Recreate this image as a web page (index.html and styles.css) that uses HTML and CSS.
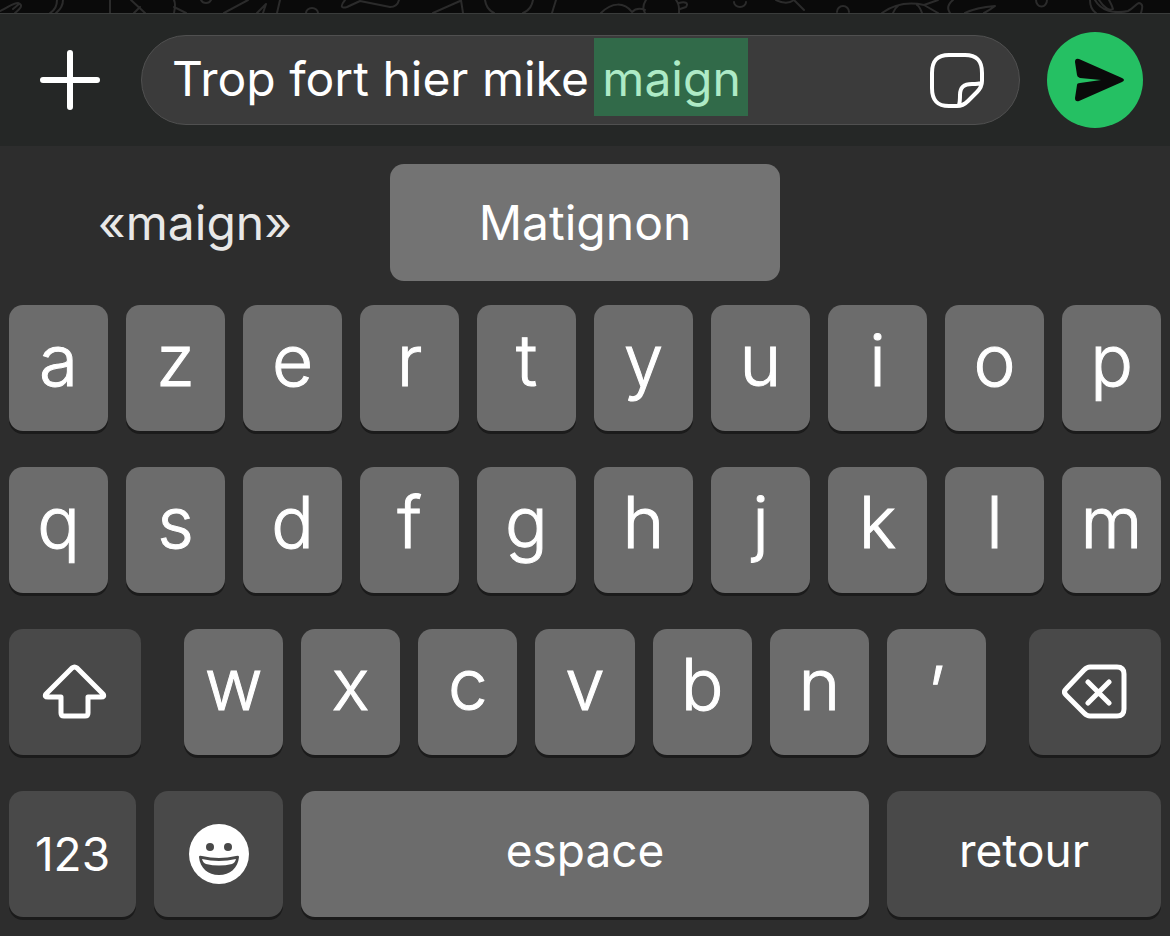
FILE: index.html
```
<!DOCTYPE html>
<html lang="fr">
<head>
    <meta charset="utf-8">
    <meta name="viewport" content="width=device-width, initial-scale=1">
    <title>Message</title>
    <link rel="stylesheet" href="styles.css">
</head>
<body>
    <div class="chat">
        <svg class="doodles" viewBox="0 0 1170 13" preserveAspectRatio="xMidYMid slice" aria-hidden="true">
            <path d="M0 11C8 8 12 3 18 3C24 5 20 9 15 13M13 9L19 4M50 13C55 10 57 5 57 0M56 13C61 9 63 4 63 0M110 0V13M131 0L145 13M134 13L140 7M174 0C176 4 175 7 174 13M174 7L186 13M201 0C203 4 209 4 211 0M224 13L248 0M257 13L266 4L263 13M280 0L277 13M306 13A6 5 0 0 1 318 13M345 0C340 6 341 9 347 7L360 1L390 7" />
            <path d="M390 7C395 7 398 4 399 0M433 13L460 1M461 0L463 13M485 0C486 7 490 11 494 13M533 0C532 6 528 11 523 13M556 0L552 13M601 13C612 2 624 2 632 12C636 8 640 8 645 10M645 13C642 8 644 3 646 0M676 0C680 5 679 9 679 13M679 3C685 1 689 3 686 7L680 9M734 2A6 5 0 1 0 746 2" />
            <path d="M776 0C784 4 790 3 794 0M794 0L804 10M837 12A6 6 0 0 1 849 12M882 13C896 3 910 2 924 5L938 0M898 6C895 8 894 10 893 13M917 5C920 7 921 10 922 13M924 5L938 13M953 0C947 5 947 9 950 13M965 13C973 9 983 7 995 6C991 9 988 11 984 13M1036 0A5 6 0 1 0 1047 0M1090 0C1090 6 1093 11 1096 13M1095 0C1101 11 1114 14 1128 11C1134 8 1136 4 1139 3C1144 4 1142 9 1141 13M1099 0C1104 8 1110 11 1113 9C1112 5 1110 2 1109 0" />
        </svg>
    </div>

    <form class="composer" onsubmit="return false">
        <button class="icon-button attach" type="button" aria-label="Ajouter">
            <svg width="60" height="60" viewBox="0 0 60 60">
                <path d="M29 3V57M2 30H56" />
            </svg>
        </button>
        <div class="field">
            <input id="message" class="field-input" type="text" value="Trop fort hier mike maign" aria-label="Message" autocomplete="off" spellcheck="false">
            <button class="icon-button sticker" type="button" aria-label="Autocollants">
                <svg width="56" height="56" viewBox="0 0 56 56">
                    <path d="M20 3H36C48 3 53 9 53 21V29C53 34 51 37 48 40L39 49C36 52 33 54 28 54H20C8 54 3 48 3 36V21C3 9 8 3 20 3ZM30 53C31 50 31 47 31 43C31 35 35 32 43 32C47 32 50 32 52 31" />
                </svg>
            </button>
        </div>
        <button class="icon-button send" type="submit" aria-label="Envoyer">
            <svg width="96" height="96" viewBox="0 0 96 96">
                <path d="M32 27L75 46Q79 48 75 50L32 69Q28 70 28 66L30 53Q30 51 33 51L54 48L33 46Q30 45 30 43L28 30Q28 26 32 27Z" />
            </svg>
        </button>
    </form>

    <div class="keyboard">
        <div class="suggestions">
            <button class="suggestion" type="button">«maign»</button>
            <button class="suggestion active" type="button">Matignon</button>
        </div>
        <div class="row">
            <button class="key" type="button">a</button>
            <button class="key" type="button">z</button>
            <button class="key" type="button">e</button>
            <button class="key" type="button">r</button>
            <button class="key" type="button">t</button>
            <button class="key" type="button">y</button>
            <button class="key" type="button">u</button>
            <button class="key" type="button">i</button>
            <button class="key" type="button">o</button>
            <button class="key" type="button">p</button>
        </div>
        <div class="row">
            <button class="key" type="button">q</button>
            <button class="key" type="button">s</button>
            <button class="key" type="button">d</button>
            <button class="key" type="button">f</button>
            <button class="key" type="button">g</button>
            <button class="key" type="button">h</button>
            <button class="key" type="button">j</button>
            <button class="key" type="button">k</button>
            <button class="key" type="button">l</button>
            <button class="key" type="button">m</button>
        </div>
        <div class="row row-shift">
            <button class="key dark" type="button" aria-label="Majuscule">
                <svg width="66" height="60" viewBox="0 0 66 60">
                    <path d="M30 6Q32.500 4 35 6L61 32Q63 35 59 35H46V51Q46 54 43 54H22Q19 54 19 51V35H6Q2 35 4 32Z" />
                </svg>
            </button>
            <div class="letters">
                <button class="key" type="button">w</button>
                <button class="key" type="button">x</button>
                <button class="key" type="button">c</button>
                <button class="key" type="button">v</button>
                <button class="key" type="button">b</button>
                <button class="key" type="button">n</button>
                <button class="key centered" type="button">’</button>
            </div>
            <button class="key dark" type="button" aria-label="Supprimer">
                <svg width="66" height="60" viewBox="0 0 66 60">
                    <path d="M28 5H55Q62 5 62 12V47Q62 54 55 54H28Q25 54 22 51L4 33Q1 30 4 27L22 8Q25 5 28 5ZM26 20L47 41M47 20L26 41" />
                </svg>
            </button>
        </div>
        <div class="row row-space">
            <button class="key dark label centered" type="button">123</button>
            <button class="key dark label centered" type="button" aria-label="Emoji">
                <svg class="emoji" width="60" height="60" viewBox="0 0 60 60">
                    <circle class="face" cx="30" cy="30" r="30" />
                    <ellipse cx="21" cy="23" rx="4" ry="4" />
                    <ellipse cx="39" cy="23" rx="4" ry="4" />
                    <path d="M10 33Q10 31 13 32Q30 36 47 32Q50 31 50 33C49 44 41 51 30 51C19 51 11 44 10 33Z" />
                    <path class="face" d="M13 35Q30 39 47 35Q46 39 43 40Q30 43 17 40Q14 39 13 35Z" />
                </svg>
            </button>
            <button class="key label" type="button">espace</button>
            <button class="key dark label" type="button">retour</button>
        </div>
    </div>

    <script>
        var message = document.getElementById('message');
        var context = document.createElement('canvas').getContext('2d');

        // the highlight is taller and wider than the native selection
        function updateHighlight() {
            var start = message.selectionStart;
            var end = message.selectionEnd;
            context.font = getComputedStyle(message).font;
            var left = context.measureText(message.value.slice(0, start)).width;
            var right = context.measureText(message.value.slice(0, end)).width;
            message.style.setProperty('--highlight-left', Math.round(left) + 'px');
            message.style.setProperty('--highlight-width', (end > start ? Math.round(right - left) + 16 : 0) + 'px');
        }

        document.addEventListener('selectionchange', updateHighlight);
        message.addEventListener('input', updateHighlight);
        message.focus();
        message.setSelectionRange(message.value.lastIndexOf(' ') + 1, message.value.length);
        updateHighlight();
    </script>
</body>
</html>
```
FILE: styles.css
```
* {
    box-sizing: border-box;
}
body {
    margin: 0;
    background: #2d2d2d;
    color: #fff;
    font-family: Inter, "Liberation Sans", sans-serif;
}
button {
    margin: 0;
    padding: 0;
    border: none;
    color: inherit;
    font: inherit;
    cursor: pointer;
}
svg {
    display: block;
    fill: none;
    stroke: #fff;
    stroke-linecap: round;
    stroke-linejoin: round;
}
.chat {
    height: 13px;
    background: #0a0a0a;
}
.doodles {
    width: 100%;
    height: 13px;
    stroke: #2b2b2b;
    stroke-width: 2px;
}
.composer {
    display: flex;
    align-items: center;
    gap: 27px;
    padding: 18px 27px;
    border-top: 1px solid #3a3c3b;
    background: #252726;
}
.icon-button {
    display: flex;
    flex: none;
    align-items: center;
    justify-content: center;
    background: none;
}
.attach {
    width: 87px;
    height: 87px;
    stroke-width: 6px;
}
.attach svg {
    overflow: visible;
}
.field {
    display: flex;
    flex: 1;
    align-items: center;
    min-width: 0;
    height: 90px;
    padding: 0 34px 0 22px;
    border: 1px solid #505050;
    border-radius: 45px;
    background: #3b3b3b;
}
.field-input {
    flex: 1;
    min-width: 0;
    height: 88px;
    margin: 0;
    padding: 2px 8px 6px;
    border: none;
    outline: none;
    background: linear-gradient(#316a49, #316a49) no-repeat var(--highlight-left) 2px / var(--highlight-width) 78px;
    color: #fff;
    font: 400 48px/78px Inter, "Liberation Sans", sans-serif;
}
.field-input::selection {
    background: transparent;
    color: #aeeac6;
}
.sticker {
    stroke-width: 4px;
}
.send {
    width: 96px;
    height: 96px;
    border-radius: 50%;
    background: #25c063;
}
.send svg {
    fill: #0a0a0a;
    stroke: none;
}
.keyboard {
    display: grid;
    gap: 36px;
    padding: 18px 9px;
}
.suggestions {
    display: grid;
    grid-template-columns: repeat(3, 1fr);
    margin: 0 -9px -12px;
}
.suggestion {
    height: 117px;
    border-radius: 14px;
    background: none;
    color: #e8e8e8;
    font-size: 48px;
}
.suggestion.active {
    background: #737373;
    color: #fff;
}
.row,
.letters {
    display: grid;
    grid-template-columns: repeat(10, 1fr);
    gap: 18px;
}
.row-shift {
    grid-template-columns: 132fr 802fr 132fr;
    gap: 43px;
}
.letters {
    grid-template-columns: repeat(7, 1fr);
}
.row-space {
    grid-template-columns: 127fr 129fr 568fr 274fr;
}
.key {
    display: flex;
    align-items: center;
    justify-content: center;
    min-width: 0;
    height: 126px;
    padding-bottom: 16px;
    border-radius: 14px;
    background: #6c6c6c;
    box-shadow: 0 3px 0 #1b1b1b;
    font-size: 71px;
    font-weight: 300;
    line-height: 86px;
    -webkit-text-stroke: 1px #fff;
}
.key.dark {
    padding-bottom: 0;
    background: #494949;
    stroke-width: 5px;
}
.key.label {
    padding-bottom: 8px;
    font-size: 46px;
    font-weight: 400;
    -webkit-text-stroke: 0;
}
.key.centered {
    padding-bottom: 0;
}
.emoji {
    fill: #494949;
    stroke: none;
}
.emoji .face {
    fill: #fff;
}
```
